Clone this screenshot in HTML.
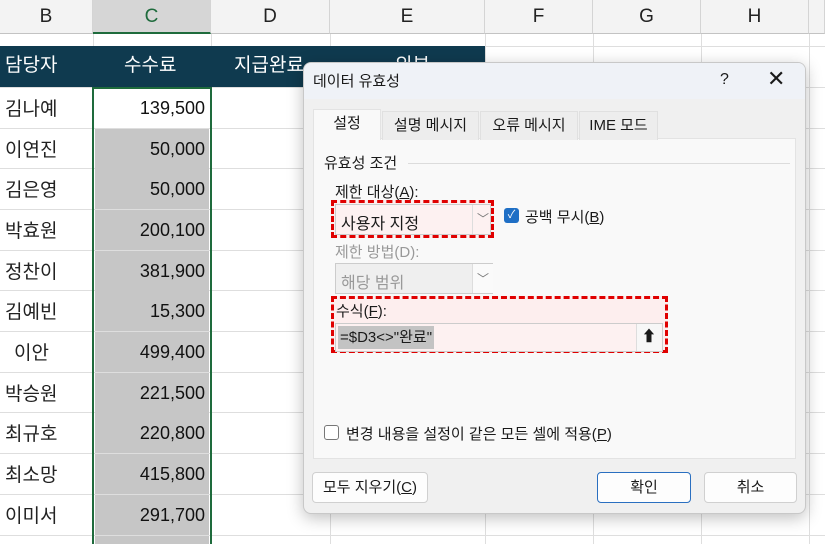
<!DOCTYPE html>
<html style="width:825px;height:544px;overflow:hidden"><head><meta charset="utf-8"><style>
*{margin:0;padding:0;box-sizing:border-box}
body{width:825px;height:544px;overflow:hidden;background:#fff;font-family:"Liberation Sans","Noto Sans CJK KR",sans-serif;position:relative}
.a{position:absolute}
.ch{top:0;height:34px;background:#f3f3f3;border-right:1px solid #d4d4d4;border-bottom:1px solid #c3c3c3;font-size:19px;color:#222;text-align:center;line-height:34px}
.vl{top:34px;height:510px;width:1px;background:#dedede}
.hl{left:0;width:825px;height:1px;background:#dedede}
.nm{left:5px;font-size:19px;color:#222}
.val{left:95px;width:114px;height:40px;text-align:right;padding-right:4px;font-size:18px;color:#111;line-height:40px;background:#c6c6c6}
.dlg{left:303px;top:62px;width:503px;height:452px;background:#f0f0f0;border:1px solid #c8c8c8;border-radius:8px;box-shadow:0 4px 16px rgba(0,0,0,.25);overflow:hidden;font-size:15px;color:#1a1a1a}
.tab{top:48px;height:29px;background:#ededed;border:1px solid #e0e0e0;border-bottom:none;text-align:center;line-height:28px;font-size:15px}
.red{border:3px dashed #e00000}
.btn{height:31px;background:#fdfdfd;border:1px solid #d0d0d0;border-radius:4px;text-align:center;line-height:29px;font-size:15px}
u{text-decoration:underline}
</style></head><body>
<div class="a ch" style="left:0;width:93px">B</div>
<div class="a ch" style="left:93px;width:118px;background:#d6d6d6;color:#1e6b3c;border-bottom:2px solid #1e6b3c">C</div>
<div class="a ch" style="left:211px;width:119px">D</div>
<div class="a ch" style="left:330px;width:155px">E</div>
<div class="a ch" style="left:485px;width:108px">F</div>
<div class="a ch" style="left:593px;width:108px">G</div>
<div class="a ch" style="left:701px;width:108px">H</div>
<div class="a ch" style="left:809px;width:16px"></div>
<div class="a vl" style="left:93px"></div><div class="a vl" style="left:211px"></div><div class="a vl" style="left:330px"></div><div class="a vl" style="left:485px"></div><div class="a vl" style="left:593px"></div><div class="a vl" style="left:701px"></div><div class="a vl" style="left:809px"></div>
<div class="a hl" style="top:46px"></div><div class="a hl" style="top:87px"></div><div class="a hl" style="top:128px"></div><div class="a hl" style="top:168px"></div><div class="a hl" style="top:209px"></div><div class="a hl" style="top:250px"></div><div class="a hl" style="top:290px"></div><div class="a hl" style="top:331px"></div><div class="a hl" style="top:372px"></div><div class="a hl" style="top:412px"></div><div class="a hl" style="top:453px"></div><div class="a hl" style="top:494px"></div><div class="a hl" style="top:535px"></div>
<div class="a" style="left:0;top:46px;width:485px;height:41px;background:#0f3a4f;color:#fff;font-size:19px;line-height:40px">
<span class="a" style="left:5px">담당자</span><span class="a" style="left:124px">수수료</span><span class="a" style="left:234px">지급완료</span><span class="a" style="left:395px">외부</span></div>
<div class="a val" style="top:88px;background:#fff">139,500</div>
<div class="a val" style="top:129px">50,000</div>
<div class="a val" style="top:169px">50,000</div>
<div class="a val" style="top:210px">200,100</div>
<div class="a val" style="top:251px">381,900</div>
<div class="a val" style="top:291px">15,300</div>
<div class="a val" style="top:332px">499,400</div>
<div class="a val" style="top:373px">221,500</div>
<div class="a val" style="top:413px">220,800</div>
<div class="a val" style="top:454px">415,800</div>
<div class="a val" style="top:495px">291,700</div>
<div class="a val" style="top:536px;height:8px"></div>
<div class="a" style="left:92px;top:87px;width:120px;height:457px;border:2px solid #1e6b3c;border-bottom:none"></div>
<div class="a nm" style="top:94px">김나예</div><div class="a nm" style="top:135px">이연진</div><div class="a nm" style="top:175px">김은영</div><div class="a nm" style="top:216px">박효원</div><div class="a nm" style="top:257px">정찬이</div><div class="a nm" style="top:297px">김예빈</div><div class="a nm" style="top:338px;left:14px">이안</div><div class="a nm" style="top:379px">박승원</div><div class="a nm" style="top:419px">최규호</div><div class="a nm" style="top:460px">최소망</div><div class="a nm" style="top:501px">이미서</div>

<div class="a dlg">
<div class="a" style="left:0;top:0;width:503px;height:36px;background:#eff2f7"></div>
<div class="a" style="left:9px;top:7px;font-size:15px">데이터 유효성</div>
<div class="a" style="left:416px;top:8px;font-size:16px">?</div>
<div class="a" style="left:463px;top:3px;font-size:22px;font-weight:300">✕</div>
<div class="a" style="left:9px;top:75px;width:483px;height:321px;background:#f9f9f9;border:1px solid #e3e3e3"></div>
<div class="a tab" style="left:9px;top:46px;width:68px;height:31px;background:#f9f9f9;border-color:#e3e3e3">설정</div>
<div class="a tab" style="left:78px;width:97px">설명 메시지</div>
<div class="a tab" style="left:176px;width:98px">오류 메시지</div>
<div class="a tab" style="left:275px;width:79px">IME 모드</div>
<div class="a" style="left:20px;top:89px">유효성 조건</div>
<div class="a" style="left:104px;top:100px;width:382px;height:1px;background:#dcdcdc"></div>
<div class="a" style="left:31px;top:118px">제한 대상(<u>A</u>):</div>
<div class="a red" style="left:27px;top:137px;width:163px;height:38px;background:#fdeeee"></div>
<div class="a" style="left:31px;top:141px;width:156px;height:31px;border:1px solid #ccc;background:#fdf1f1"><span class="a" style="left:5px;top:5px;font-size:16px">사용자 지정</span><span class="a" style="left:136px;top:0;width:1px;height:29px;background:#ddd"></span><span class="a" style="left:141px;top:5px;color:#777;font-size:12px">﹀</span></div>
<div class="a" style="left:200px;top:145px;width:15px;height:15px;background:#1f6fc5;border-radius:3px;color:#fff;font-size:11px;text-align:center;line-height:15px">✓</div>
<div class="a" style="left:221px;top:143px">공백 무시(<u>B</u>)</div>
<div class="a" style="left:31px;top:178px;color:#999">제한 방법(D):</div>
<div class="a" style="left:31px;top:200px;width:158px;height:31px;border:1px solid #ccc;background:#efefef"><span class="a" style="left:5px;top:5px;font-size:16px;color:#999">해당 범위</span><span class="a" style="left:136px;top:0;width:21px;height:29px;background:#fafafa;border-left:1px solid #ddd"></span><span class="a" style="left:141px;top:6px;color:#777;font-size:12px">﹀</span></div>
<div class="a red" style="left:27px;top:233px;width:337px;height:57px;background:#fdeeee"></div>
<div class="a" style="left:32px;top:237px">수식(<u>F</u>):</div>
<div class="a" style="left:31px;top:260px;width:328px;height:29px;border:1px solid #ccc;background:#fdf1f1"><span class="a" style="left:2px;top:2px;height:23px;padding:0 2px;background:#c3c3c3;font-size:15px;line-height:23px">=$D3&lt;&gt;"완료"</span><span class="a" style="left:300px;top:0;width:25px;height:27px;background:#f7f7f7;border-left:1px solid #ddd;text-align:center;font-weight:bold;line-height:26px">⬆</span></div>
<div class="a" style="left:20px;top:362px;width:15px;height:15px;border:1px solid #777;border-radius:3px;background:#fff"></div>
<div class="a" style="left:42px;top:360px">변경 내용을 설정이 같은 모든 셀에 적용(<u>P</u>)</div>
<div class="a btn" style="left:8px;top:409px;width:116px">모두 지우기(<u>C</u>)</div>
<div class="a btn" style="left:293px;top:409px;width:94px;border-color:#2a6fc0">확인</div>
<div class="a btn" style="left:400px;top:409px;width:93px">취소</div>
</div>
</body></html>
